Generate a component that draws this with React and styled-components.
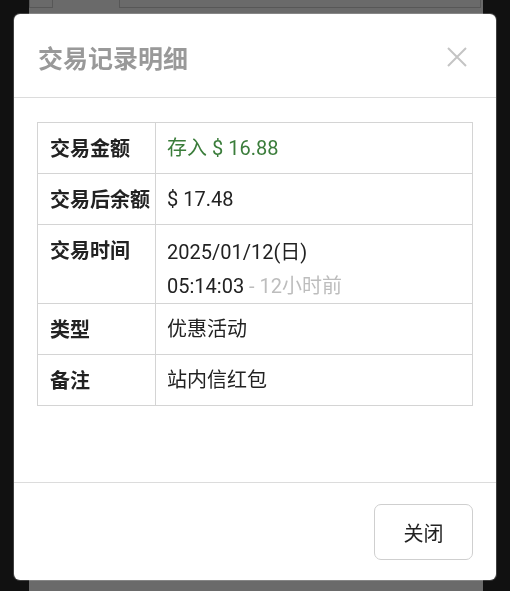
import React from "react";
import styled, { createGlobalStyle } from "styled-components";

const GlobalStyle = createGlobalStyle`
  html, body {
    margin: 0;
    padding: 0;
    background: #111;
    font-family: Roboto, "Noto Sans CJK SC", "Noto Sans", sans-serif;
  }
`;

const rows = [
  { label: "交易金额", value: "存入 $ 16.88", tone: "in" },
  { label: "交易后余额", value: "$ 17.48" },
  { label: "交易时间", date: "2025/01/12(日)", time: "05:14:03", ago: "12小时前" },
  { label: "类型", value: "优惠活动" },
  { label: "备注", value: "站内信红包" },
];

const App = () => {
  return (
    <>
      <GlobalStyle />
      <Page>
        <Panel>
          <FieldRow>
            <FieldStub $width="22px" />
            <FieldStub $width="360px" />
          </FieldRow>
        </Panel>
      </Page>
      <Modal>
        <Header>
          <Title>交易记录明细</Title>
          <CloseButton aria-label="close">
            <svg width="22" height="20" viewBox="0 0 22 20">
              <path d="M2 1 L20 19 M20 1 L2 19" stroke="#c4c4c4" strokeWidth="2" fill="none" />
            </svg>
          </CloseButton>
        </Header>
        <Body>
          <DetailTable>
            <tbody>
              {rows.map((row) => (
                <tr key={row.label}>
                  <LabelCell>{row.label}</LabelCell>
                  {row.date ? (
                    <ValueCell $multi>
                      <Line>{row.date}</Line>
                      <Line>
                        {row.time} <Muted>- {row.ago}</Muted>
                      </Line>
                    </ValueCell>
                  ) : (
                    <ValueCell $tone={row.tone}>{row.value}</ValueCell>
                  )}
                </tr>
              ))}
            </tbody>
          </DetailTable>
        </Body>
        <Footer>
          <Button>关闭</Button>
        </Footer>
      </Modal>
    </>
  );
};

export default App;

const Page = styled.div`
  min-height: 591px;
  display: flex;
  justify-content: center;
`;

const Panel = styled.div`
  width: 454px;
  margin-left: 1px;
  background: #6a6a6a;
  min-height: 591px;
`;

const FieldRow = styled.div`
  display: flex;
  justify-content: space-between;
  padding: 0 2px 0 0;
`;

const FieldStub = styled.div`
  width: ${(p) => p.$width};
  height: 7px;
  border: 1px solid #575757;
  border-top: none;
`;

const Modal = styled.div`
  position: fixed;
  top: 14px;
  left: 14px;
  width: 482px;
  height: 566px;
  background: #fff;
  border-radius: 6px;
  display: flex;
  flex-direction: column;
  box-shadow: 0 0 0 1px rgba(255, 255, 255, 0.2);
  overflow: hidden;
`;

const Header = styled.div`
  height: 84px;
  box-sizing: border-box;
  padding: 3px 28px 0 24px;
  border-bottom: 1px solid #dcdcdc;
  display: flex;
  align-items: center;
  justify-content: space-between;
`;

const Title = styled.h4`
  margin: 0;
  font-family: "Noto Sans CJK SC", sans-serif;
  font-size: 25px;
  font-weight: 700;
  color: #999;
`;

const CloseButton = styled.button`
  border: none;
  background: none;
  padding: 0;
  display: flex;
  cursor: pointer;
`;

const Body = styled.div`
  flex: 1;
  padding: 24px 23px 23px;
`;

const DetailTable = styled.table`
  width: 100%;
  border-collapse: collapse;
  font-size: 20px;
  line-height: 34px;
`;

const LabelCell = styled.th`
  width: 98px;
  text-align: left;
  vertical-align: top;
  padding: 8px 5px 8px 12px;
  border: 1px solid #d4d4d4;
  font-family: "Noto Sans CJK SC", sans-serif;
  font-weight: 700;
  color: #222;
  white-space: nowrap;
`;

const ValueCell = styled.td`
  padding: ${(p) => (p.$multi ? "10px 11px 0" : "8px 11px")};
  border: 1px solid #d4d4d4;
  color: ${(p) => (p.$tone === "in" ? "#3b7d3b" : "#222")};
`;

const Line = styled.div``;

const Muted = styled.span`
  color: #bdbdbd;
`;

const Footer = styled.div`
  height: 98px;
  box-sizing: border-box;
  border-top: 1px solid #dcdcdc;
  display: flex;
  align-items: center;
  justify-content: flex-end;
  padding: 0 23px 0 0;
`;

const Button = styled.button`
  width: 99px;
  height: 56px;
  margin-top: 1px;
  border: 1px solid #cfcfcf;
  border-radius: 7px;
  background: #fff;
  font-family: "Noto Sans CJK SC", "Noto Sans", sans-serif;
  font-size: 20px;
  color: #222;
  cursor: pointer;
`;
